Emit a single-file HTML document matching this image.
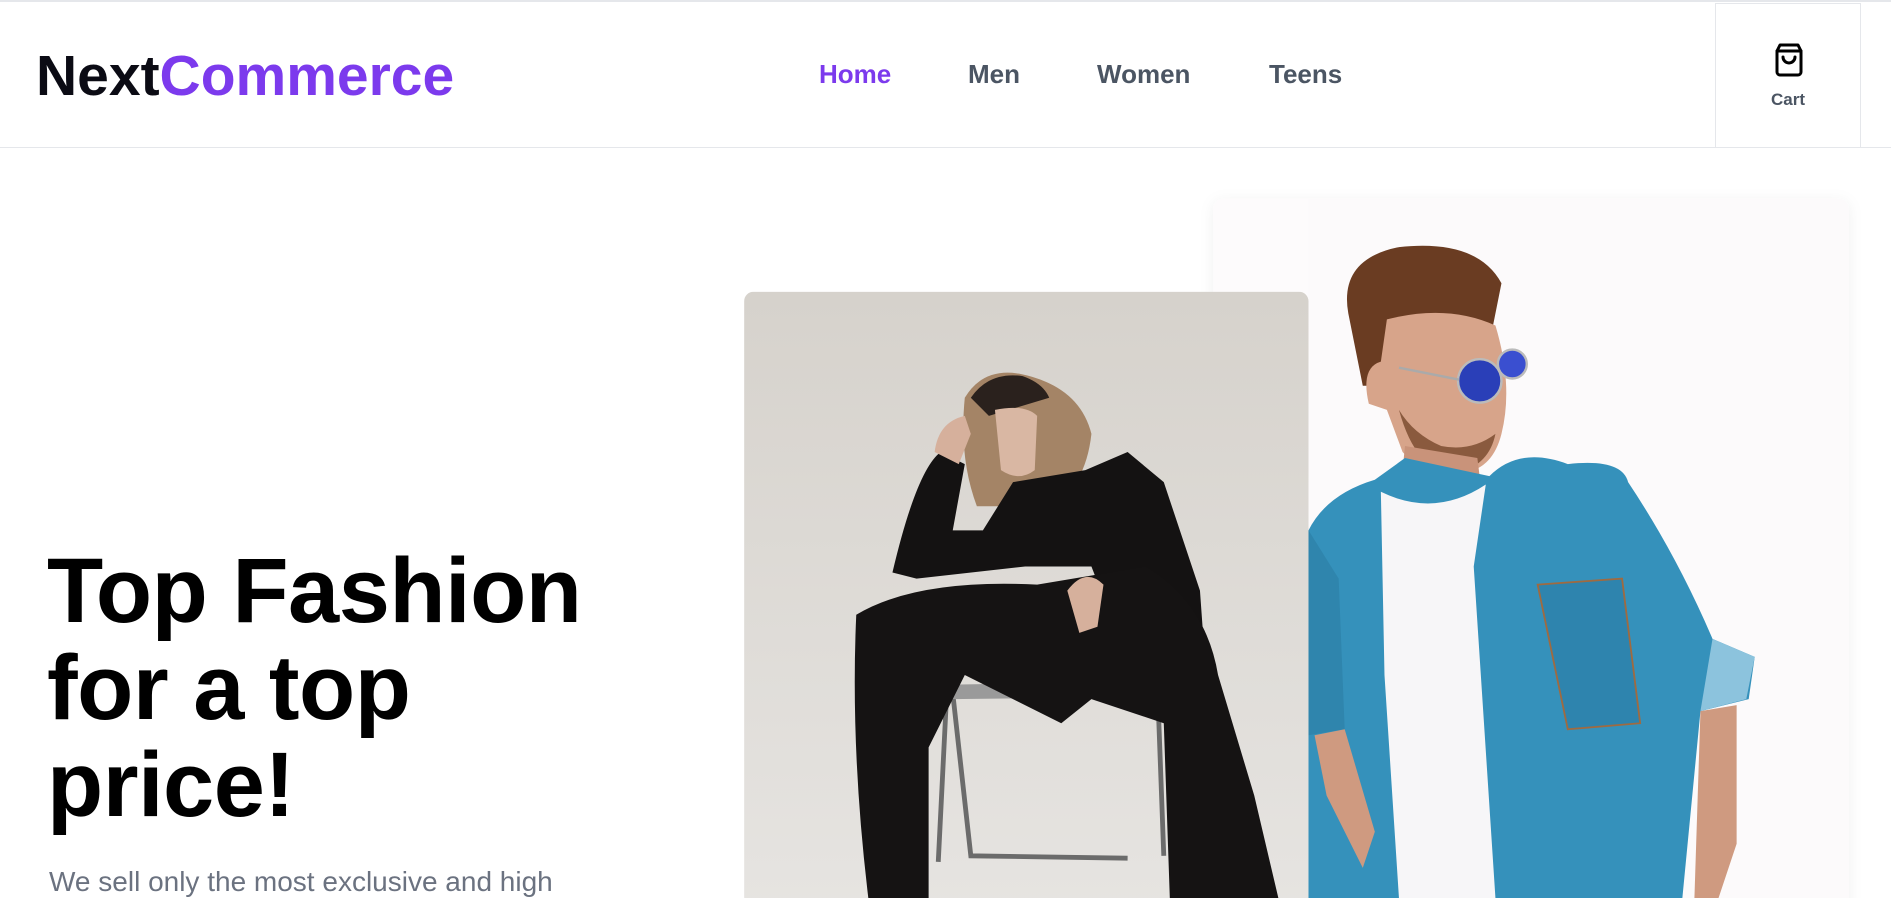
<!DOCTYPE html>
<html><head><meta charset="utf-8"><style>
*{margin:0;padding:0;box-sizing:border-box}
html,body{width:1891px;height:898px;overflow:hidden;background:#fff;font-family:"Liberation Sans",sans-serif}
.top{position:absolute;left:0;top:0;width:1891px;height:2px;background:#e5e7eb}
.hdr{position:absolute;left:0;top:2px;width:1891px;height:146px;border-bottom:1px solid #e5e7eb}
.logo{position:absolute;left:36px;top:43px;font-size:57px;font-weight:bold;color:#0b0b14;letter-spacing:0px}
.logo span{color:#7c3aed}
.nav a{position:absolute;top:59px;font-size:26px;font-weight:bold;color:#4b5563;text-decoration:none}
.cart{position:absolute;left:1715px;top:3px;width:146px;height:145px;border:1px solid #e5e7eb;text-align:center}
.cart .l{position:absolute;left:0;width:100%;top:86px;font-size:17px;font-weight:bold;color:#4b5563}
h1{position:absolute;left:47px;top:543px;font-size:92px;line-height:97px;font-weight:bold;color:#000;letter-spacing:-0.5px}
p{position:absolute;left:49px;top:866px;font-size:28px;color:#6b7280;white-space:nowrap}
svg.ph{position:absolute;left:0;top:0}
</style></head><body>
<div class="top"></div>
<div class="hdr"></div>
<div class="logo">Next<span>Commerce</span></div>
<div class="nav"><a style="left:819px;color:#7c3aed">Home</a><a style="left:968px">Men</a><a style="left:1097px">Women</a><a style="left:1269px">Teens</a></div>
<div class="cart">
<svg style="position:absolute;left:55px;top:38px" width="36" height="36" viewBox="0 0 24 24" fill="none" stroke="#000" stroke-width="2" stroke-linecap="round" stroke-linejoin="round"><path d="M6 2 4 6v14a2 2 0 0 0 2 2h12a2 2 0 0 0 2-2V6l-2-4z"/><path d="M4 6h16"/><path d="M16 10a4 4 0 0 1-8 0"/></svg>
<div class="l">Cart</div></div>
<h1>Top Fashion<br>for a top<br>price!</h1>
<p>We sell only the most exclusive and high</p>
<svg class="ph" width="1891" height="898" viewBox="0 0 1568 745" preserveAspectRatio="none">
<defs>
<linearGradient id="wb" x1="0" y1="0" x2="0" y2="1"><stop offset="0" stop-color="#d6d2cc"/><stop offset="1" stop-color="#e6e4e1"/></linearGradient>
<filter id="sh" x="-10%" y="-10%" width="120%" height="120%"><feDropShadow dx="0" dy="2" stdDeviation="6" flood-color="#000" flood-opacity="0.06"/></filter>
<clipPath id="wc"><rect x="617" y="242" width="468" height="510" rx="8"/></clipPath>
<clipPath id="mc"><rect x="1006" y="165" width="527" height="590" rx="8"/></clipPath>
</defs>
<rect x="1006" y="165" width="527" height="600" rx="8" fill="#fdfbfc" filter="url(#sh)"/>
<g clip-path="url(#mc)">
<rect x="1085" y="165" width="448" height="590" fill="#fcfafb"/>
<path d="M1118 260 Q1110 215 1160 205 Q1225 198 1245 235 L1238 270 Q1200 255 1165 268 L1150 320 L1130 320Z" fill="#6a3c22"/>
<path d="M1150 265 Q1200 252 1240 270 Q1255 320 1245 360 Q1238 388 1215 392 Q1180 395 1163 375 L1150 340 L1135 335 Q1128 305 1145 300Z" fill="#d7a48a"/>
<path d="M1160 340 Q1175 395 1210 392 Q1235 385 1240 360 Q1220 375 1195 370 Q1172 360 1160 340Z" fill="#8a5a3e"/>
<circle cx="1227" cy="316" r="18" fill="#2a3fb8" stroke="#bbb" stroke-width="2"/>
<circle cx="1254" cy="302" r="12" fill="#3a4fd0" stroke="#bbb" stroke-width="2"/>
<path d="M1160 305 L1210 315" stroke="#aaa" stroke-width="2"/>
<path d="M1165 370 L1225 380 L1230 420 L1160 420Z" fill="#c9937a"/>
<path d="M1085 745 L1085 440 Q1100 410 1140 398 L1165 380 L1235 395 Q1260 370 1300 385 Q1345 380 1350 400 Q1390 460 1420 530 L1455 545 L1450 580 L1410 590 L1395 745Z" fill="#3591bb"/>
<path d="M1085 440 L1085 610 L1115 605 L1110 480Z" fill="#2f85ad"/>
<path d="M1420 530 L1455 545 L1448 580 L1410 590Z" fill="#8cc3dd"/>
<path d="M1145 408 Q1190 430 1232 402 L1222 470 L1240 745 L1160 745 L1148 560Z" fill="#f7f6f8"/>
<path d="M1090 610 L1115 605 L1140 690 L1130 720 L1100 660Z" fill="#cf9a80"/>
<path d="M1410 590 L1440 585 L1440 700 L1425 745 L1405 745Z" fill="#cf9a80"/>
<path d="M1275 485 L1345 480 L1360 600 L1300 605Z" fill="#2e84ae" stroke="#a06a40" stroke-width="1.5"/>
</g>
<g clip-path="url(#wc)">
<rect x="617" y="242" width="468" height="510" fill="url(#wb)"/>
<path d="M785 575 L778 715 M790 575 L805 710 L935 712 M960 575 L965 710" stroke="#6b6b6b" stroke-width="4" fill="none"/>
<path d="M790 568 L965 565 L960 578 L790 580Z" fill="#9a9a9a"/>
<path d="M800 330 Q815 305 845 310 Q895 320 905 360 Q900 405 870 420 L810 420 Q795 380 800 330Z" fill="#a48466"/>
<path d="M805 330 Q820 308 848 312 Q865 318 870 330 L820 345Z" fill="#2a211d"/>
<path d="M825 340 Q850 335 860 345 L858 390 Q845 400 830 390Z" fill="#d9b7a3"/>
<path d="M740 475 Q760 390 780 375 L800 385 L790 440 L815 440 L840 400 L900 390 L935 375 L965 400 L995 490 L1000 560 L940 560 L905 470 L850 470 L760 480Z" fill="#141212"/>
<path d="M775 375 Q778 350 800 345 L805 360 L795 385Z" fill="#d6b09c"/>
<path d="M710 510 Q760 480 860 485 L950 470 Q1000 500 1010 560 L1040 660 L1060 745 L970 745 L965 600 L905 580 L880 600 L800 560 L770 620 L770 745 L720 745 Q705 620 710 510Z" fill="#151313"/>
<path d="M885 490 Q900 470 915 485 L910 520 L895 525Z" fill="#d6b09c"/>
</g>
</svg>
</body></html>
